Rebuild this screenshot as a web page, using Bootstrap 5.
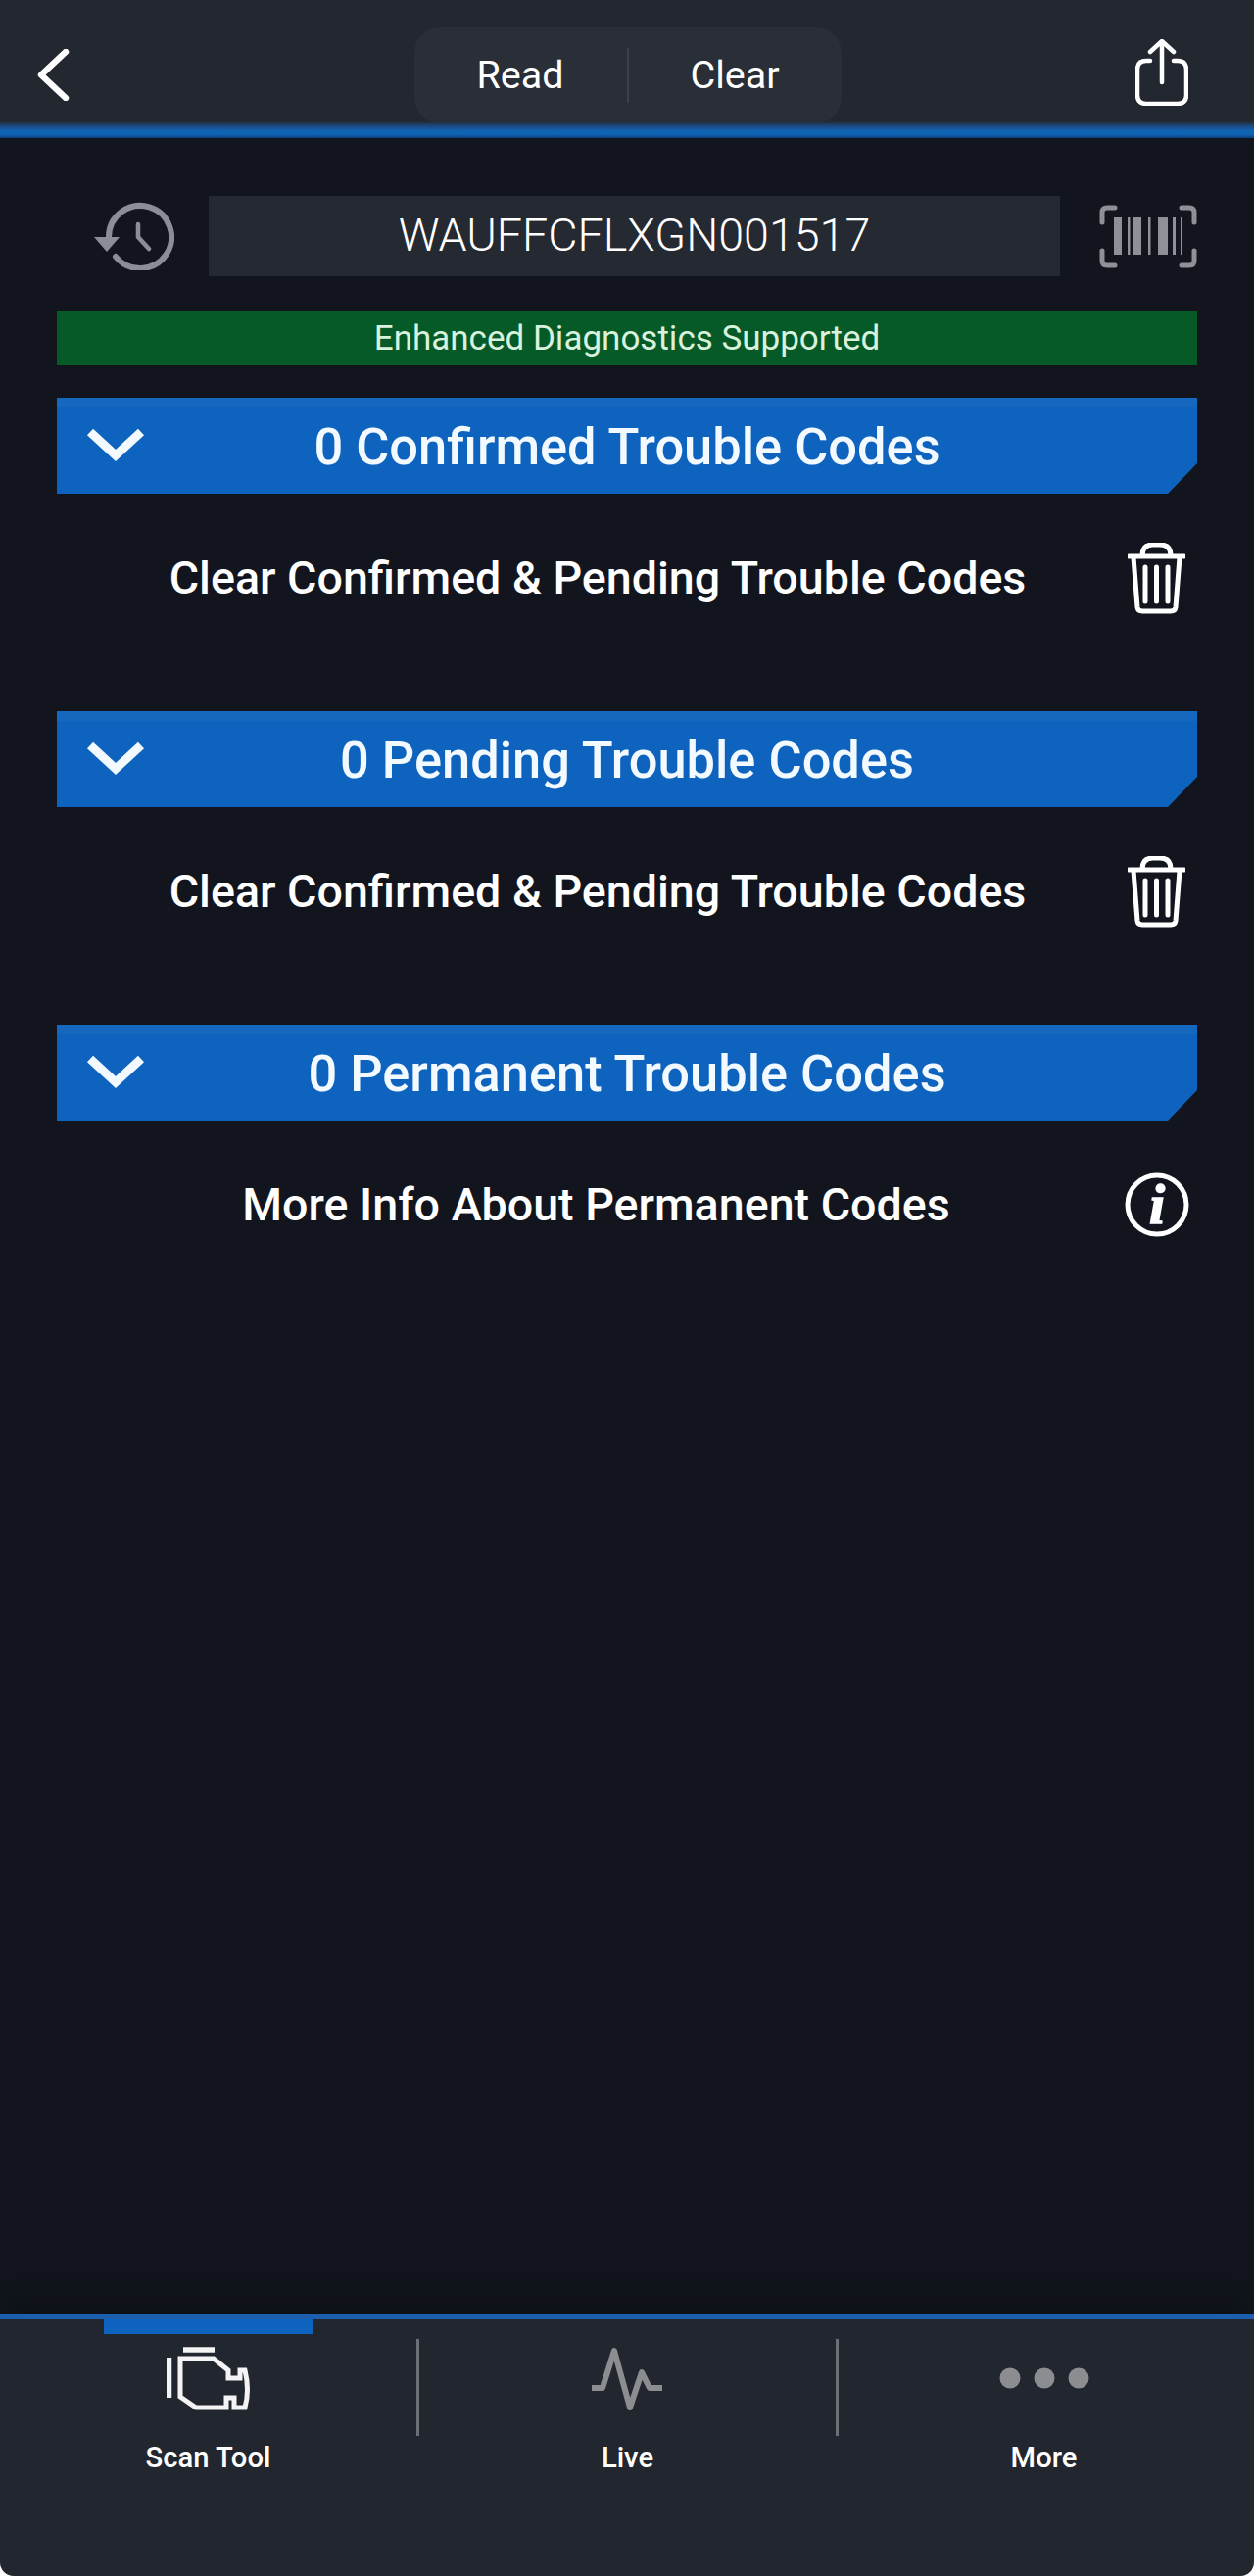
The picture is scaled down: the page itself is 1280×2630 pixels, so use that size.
<!DOCTYPE html>
<html lang="en">
<head>
    <meta charset="UTF-8">
    <meta name="viewport" content="width=device-width, initial-scale=1.0">
    <title>Scan Tool</title>
    <link href="https://cdn.jsdelivr.net/npm/bootstrap@5.3.0/dist/css/bootstrap.min.css" rel="stylesheet">
    <style>
        body { background: #fff; font-family: Roboto, "Liberation Sans", sans-serif; color: #fff; }
        .app-page { height: 2630px; }
        .top-bar { display: grid; grid-template-columns: 1fr auto 1fr; height: 125px; background: #23272f; padding: 0 67px; }
        .top-back { margin: 50px 0 0 -29px; }
        .top-share { margin-top: 40px; justify-self: end; }
        .seg-pill { width: 436px; height: 98px; margin: 28px 0 0 1px; background: #2a2e37; border-radius: 26px; font-size: 39.5px; }
        .seg-item { flex: 1; text-align: center; }
        .seg-sep { width: 2px; height: 56px; background: #3c4049; }
        .top-line { height: 16px; background: linear-gradient(#23303f 0, #1a4f8f 30%, #1164b4 55%, #1164b4 75%, #0b3f80 100%); }
        .scan-area { background: #12151d; padding: 59px 58px 0; }
        .vin-input { width: 869px; height: 82px; margin: 0 40px 0 35px; background: #252932; font-size: 46.6px; font-weight: 300; }
        .vin-row { padding-left: 38px; }
        .enhanced-strip { height: 55px; margin-top: 36px; margin-bottom: 33px; padding-top: 1px; background: #055a28; color: #d9f2dd; font-size: 35px; }
        .code-group { height: 320px; }
        .code-bar { display: grid; grid-template-columns: 1fr auto 1fr; align-items: center; height: 98px; background: linear-gradient(#1668be 0, #1668be 10px, #0d63bd 10px); clip-path: polygon(0 0, 100% 0, 100% 67px, 1134px 100%, 0 100%); font-size: 52.4px; font-weight: 500; color: #f2f9ff; }
        .code-bar svg { margin: -3px 0 0 30px; display: block; }
        .code-bar-title { padding-top: 3px; }
        .code-row { height: 172px; padding-right: 12px; font-size: 46.6px; font-weight: 500; }
        .code-row-text { flex: 1; text-align: center; padding: 1px 0 0 11px; }
        .bottom-tabs { height: 268px; background: #22262e; border-top: 6px solid #1c5fae; border-radius: 0 0 14px 14px; box-shadow: 0 -24px 24px -8px #0e1118; font-size: 29.2px; font-weight: 500; }
        .tab-cell { width: 425px; }
        .tab-cell-last { flex: 1; padding-right: 5px; }
        .tab-mark { width: 214px; height: 15px; }
        .tab-mark-on { background: #0d63bd; }
        .tab-icon { height: 66px; margin-top: 13px; }
        .tab-label { margin-top: 29px; line-height: 36px; }
        .tab-sep { width: 3px; height: 99px; margin-top: 20px; background: #6c6f75; }
    </style>
</head>
<body>
    <div class="app-page d-flex flex-column">
        <!-- top bar -->
        <div class="top-bar">
            <svg class="top-back" width="33" height="53" viewBox="0 0 33 53"><path d="M29 3 L4 26.5 L29 50" fill="none" stroke="#fff" stroke-width="6.5" stroke-linecap="round" stroke-linejoin="round"/></svg>
            <div class="seg-pill d-flex align-items-center">
                <div class="seg-item">Read</div>
                <div class="seg-sep"></div>
                <div class="seg-item">Clear</div>
            </div>
            <svg class="top-share" width="54" height="68" viewBox="0 0 54 68"><path d="M15 22 H11 Q2 22 2 31 V57 Q2 66 11 66 H43 Q52 66 52 57 V31 Q52 22 43 22 H39" fill="none" stroke="#fff" stroke-width="4.5" stroke-linecap="round"/><path d="M27 44 V3 M15 13 L27 2 L39 13" fill="none" stroke="#fff" stroke-width="4.5" stroke-linecap="round" stroke-linejoin="round"/></svg>
        </div>
        <div class="top-line"></div>

        <div class="scan-area flex-grow-1">
            <!-- vin -->
            <div class="vin-row d-flex align-items-center">
                <svg width="82" height="70" viewBox="0 0 82 70"><path d="M15 36 A32 32 0 1 1 22 56" fill="none" stroke="#8b8e96" stroke-width="6" stroke-linecap="round"/><polygon points="0,36 26,36 13,51" fill="#8b8e96"/><path d="M45 23 V36 L56 48" fill="none" stroke="#8b8e96" stroke-width="4.5" stroke-linecap="round"/></svg>
                <div class="vin-input d-flex align-items-center justify-content-center">WAUFFCFLXGN001517</div>
                <svg width="100" height="65" viewBox="0 0 100 65">
                    <path d="M16 3 H8 Q3 3 3 8 V18 M84 3 H92 Q97 3 97 8 V18 M3 47 V57 Q3 62 8 62 H16 M97 47 V57 Q97 62 92 62 H84" fill="none" stroke="#8e9198" stroke-width="5" stroke-linecap="round"/>
                    <g fill="#8e9198"><rect x="15" y="13" width="8" height="38"/><rect x="29" y="13" width="2.5" height="38"/><rect x="34" y="13" width="9" height="38"/><rect x="50" y="13" width="2.5" height="38"/><rect x="60" y="13" width="10" height="38"/><rect x="75" y="13" width="3" height="38"/><rect x="83" y="13" width="2" height="38"/></g>
                </svg>
            </div>
            <div class="enhanced-strip d-flex align-items-center justify-content-center">Enhanced Diagnostics Supported</div>

            <!-- confirmed -->
            <div class="code-group">
                <div class="code-bar">
                    <svg width="60" height="36" viewBox="0 0 60 36"><path d="M4 5 L30 29 L56 5" fill="none" stroke="#f2f9ff" stroke-width="9"/></svg>
                    <div class="code-bar-title">0 Confirmed Trouble Codes</div>
                </div>
                <div class="code-row d-flex align-items-center">
                    <div class="code-row-text">Clear Confirmed &amp; Pending Trouble Codes</div>
                    <svg width="59" height="73" viewBox="0 0 59 73"><path d="M1 14 H58 M15 13 Q15 2 26 2 H33 Q44 2 44 13 M6 15 L10 66 Q10.500 70 15 70 H44 Q48.500 70 49 66 L53 15 M18 25 V60 M29.500 25 V60 M41 25 V60" fill="none" stroke="#fff" stroke-width="5" stroke-linecap="round"/></svg>
                </div>
            </div>

            <!-- pending -->
            <div class="code-group">
                <div class="code-bar">
                    <svg width="60" height="36" viewBox="0 0 60 36"><path d="M4 5 L30 29 L56 5" fill="none" stroke="#f2f9ff" stroke-width="9"/></svg>
                    <div class="code-bar-title">0 Pending Trouble Codes</div>
                </div>
                <div class="code-row d-flex align-items-center">
                    <div class="code-row-text">Clear Confirmed &amp; Pending Trouble Codes</div>
                    <svg width="59" height="73" viewBox="0 0 59 73"><path d="M1 14 H58 M15 13 Q15 2 26 2 H33 Q44 2 44 13 M6 15 L10 66 Q10.500 70 15 70 H44 Q48.500 70 49 66 L53 15 M18 25 V60 M29.500 25 V60 M41 25 V60" fill="none" stroke="#fff" stroke-width="5" stroke-linecap="round"/></svg>
                </div>
            </div>

            <!-- permanent -->
            <div class="code-group">
                <div class="code-bar">
                    <svg width="60" height="36" viewBox="0 0 60 36"><path d="M4 5 L30 29 L56 5" fill="none" stroke="#f2f9ff" stroke-width="9"/></svg>
                    <div class="code-bar-title">0 Permanent Trouble Codes</div>
                </div>
                <div class="code-row d-flex align-items-center">
                    <div class="code-row-text">More Info About Permanent Codes</div>
                    <svg width="66" height="66" viewBox="0 0 66 66" style="margin-right:-4px"><circle cx="33" cy="33" r="30" fill="none" stroke="#fff" stroke-width="5"/><text x="33" y="52" text-anchor="middle" font-family="Liberation Serif, serif" font-weight="700" font-style="italic" font-size="58" fill="#fff" stroke="#fff" stroke-width="1.5">i</text></svg>
                </div>
            </div>
        </div>

        <!-- bottom tabs -->
        <div class="bottom-tabs d-flex">
            <div class="tab-cell d-flex flex-column align-items-center">
                <div class="tab-mark tab-mark-on"></div>
                <svg class="tab-icon" width="86" height="66" viewBox="0 0 86 66"><path d="M17 3 H49 M2.500 11 V52" fill="none" stroke="#f4f4f4" stroke-width="5.500"/><path d="M14 12 H48 L63 24 V32 H75 V24 H80 Q85 44 80 62 H69 V52 H61 V62 H30 L14 51 Z" fill="none" stroke="#f4f4f4" stroke-width="5"/></svg>
                <div class="tab-label">Scan Tool</div>
            </div>
            <div class="tab-sep"></div>
            <div class="tab-cell d-flex flex-column align-items-center">
                <div class="tab-mark"></div>
                <svg class="tab-icon" width="74" height="66" viewBox="0 0 74 66"><path d="M0 42 H11 L23 4 L39 62 L51 26 L59 42 H72" fill="none" stroke="#8b8d90" stroke-width="6" stroke-linejoin="round"/></svg>
                <div class="tab-label">Live</div>
            </div>
            <div class="tab-sep"></div>
            <div class="tab-cell-last d-flex flex-column align-items-center">
                <div class="tab-mark"></div>
                <svg class="tab-icon" width="92" height="66" viewBox="0 0 92 66"><g fill="#8b8d90"><circle cx="11" cy="32" r="10.500"/><circle cx="46" cy="32" r="10.500"/><circle cx="81" cy="32" r="10.500"/></g></svg>
                <div class="tab-label">More</div>
            </div>
        </div>
    </div>
    <script src="https://cdn.jsdelivr.net/npm/bootstrap@5.3.0/dist/js/bootstrap.bundle.min.js"></script>
</body>
</html>
